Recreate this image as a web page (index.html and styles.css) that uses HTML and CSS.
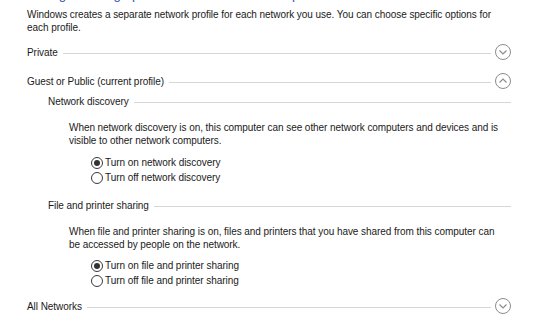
FILE: index.html
```html
<!DOCTYPE html>
<html lang="en">
<head>
  <meta charset="UTF-8" />
  <title>Advanced sharing settings</title>
  <link rel="stylesheet" href="styles.css">
</head>
<body>
  <div class="page">
    <h1 class="title">Change sharing options for different network profiles</h1>
    <p class="intro">Windows creates a separate network profile for each network you use. You can choose specific options for each profile.</p>

    <div class="profile">
      <div class="profile-head">
        <span>Private</span>
        <span class="rule"></span>
        <svg class="toggle" width="16" height="16" viewBox="0 0 16 16"><circle cx="8" cy="8" r="7.5" /><path d="M4.5 6.5 L8 10 L11.5 6.5" /></svg>
      </div>
    </div>

    <div class="profile">
      <div class="profile-head">
        <span>Guest or Public (current profile)</span>
        <span class="rule"></span>
        <svg class="toggle" width="16" height="16" viewBox="0 0 16 16"><circle cx="8" cy="8" r="7.5" /><path d="M4.5 9.5 L8 6 L11.5 9.5" /></svg>
      </div>

      <div class="group">
        <div class="group-head">
          <span>Network discovery</span>
          <span class="rule"></span>
        </div>
        <p class="desc">When network discovery is on, this computer can see other network computers and devices and is visible to other network computers.</p>
        <div class="options">
          <label class="radio"><span class="dot checked"></span>Turn on network discovery</label>
          <label class="radio"><span class="dot"></span>Turn off network discovery</label>
        </div>
      </div>

      <div class="group second">
        <div class="group-head">
          <span>File and printer sharing</span>
          <span class="rule"></span>
        </div>
        <p class="desc">When file and printer sharing is on, files and printers that you have shared from this computer can be accessed by people on the network.</p>
        <div class="options">
          <label class="radio"><span class="dot checked"></span>Turn on file and printer sharing</label>
          <label class="radio"><span class="dot"></span>Turn off file and printer sharing</label>
        </div>
      </div>
    </div>

    <div class="profile last">
      <div class="profile-head">
        <span>All Networks</span>
        <span class="rule"></span>
        <svg class="toggle" width="16" height="16" viewBox="0 0 16 16"><circle cx="8" cy="8" r="7.5" /><path d="M4.5 6.5 L8 10 L11.5 6.5" /></svg>
      </div>
    </div>
  </div>
</body>
</html>
```

FILE: styles.css
```css
* {
  margin: 0;
  padding: 0;
  box-sizing: border-box;
}
html, body {
  background: #fff;
  color: #1a1a1a;
  font-family: "Liberation Sans", Arial, sans-serif;
  font-size: 10px;
  letter-spacing: -0.06px;
  overflow: hidden;
}
.page {
  width: 511px;
  height: 336px;
  padding-left: 27px;
}
.title {
  font-size: 13.3px;
  font-weight: normal;
  letter-spacing: 0;
  color: #2f4fc0;
  line-height: 16px;
  margin-top: -13px;
  white-space: nowrap;
}
.intro {
  line-height: 13px;
  margin-top: 5px;
}
.profile {
  margin-top: 9px;
}
.profile + .profile {
  margin-top: 11px;
}
.profile.last {
  margin-top: 9px;
}
.profile-head, .group-head {
  display: flex;
  align-items: center;
  gap: 5px;
  height: 18px;
}
.group-head {
  height: 13px;
}
.rule {
  flex: 1;
  height: 1px;
  background: #d6d6d6;
  margin-top: 2px;
}
.toggle {
  flex: none;
  margin-left: -1px;
}
.toggle circle {
  fill: none;
  stroke: #8c8c8c;
  stroke-width: 1;
}
.toggle path {
  fill: none;
  stroke: #8c8c8c;
  stroke-width: 1.2;
}
.group {
  margin-top: 5px;
  padding-left: 21px;
}
.group.second {
  margin-top: 14px;
}
.desc {
  margin-top: 13px;
  padding-left: 21px;
  padding-right: 6px;
  line-height: 13px;
}
.options {
  margin-top: 8px;
  padding-left: 43px;
  display: flex;
  flex-direction: column;
}
.group.second .options {
  margin-top: 7px;
}
.radio {
  display: flex;
  align-items: center;
  gap: 2px;
  height: 15px;
}
.dot {
  width: 12px;
  height: 12px;
  border: 1px solid #3a3a3a;
  border-radius: 50%;
  display: flex;
  align-items: center;
  justify-content: center;
}
.dot.checked::after {
  content: "";
  width: 6px;
  height: 6px;
  border-radius: 50%;
  background: #333;
}
```
